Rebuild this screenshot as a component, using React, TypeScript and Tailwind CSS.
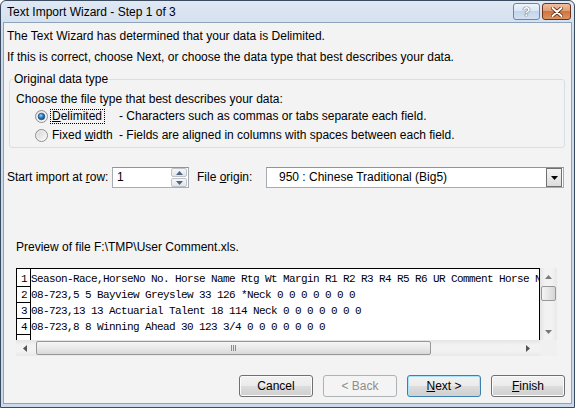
import React from 'react';

const previewRows = [
  'Season-Race,HorseNo No. Horse Name Rtg Wt Margin R1 R2 R3 R4 R5 R6 UR Comment Horse N',
  '08-723,5 5 Bayview Greyslew 33 126 *Neck 0 0 0 0 0 0 0',
  '08-723,13 13 Actuarial Talent 18 114 Neck 0 0 0 0 0 0 0',
  '08-723,8 8 Winning Ahead 30 123 3/4 0 0 0 0 0 0 0',
  '',
];

function Radio({ on, id }: { on?: boolean; id: string }) {
  return (
    <svg width="13" height="13" viewBox="0 0 13 13" className="shrink-0">
      <defs>
        <linearGradient id={`${id}-face`} x1="0" y1="0" x2="1" y2="1">
          <stop offset="0" stopColor="#d2d2d2" />
          <stop offset="1" stopColor="#fdfdfd" />
        </linearGradient>
        <radialGradient id={`${id}-dot`} cx="0.4" cy="0.35" r="0.75">
          <stop offset="0" stopColor="#9bd6fa" />
          <stop offset="0.45" stopColor="#2c7cc2" />
          <stop offset="1" stopColor="#0f3a6c" />
        </radialGradient>
      </defs>
      <circle cx="6.5" cy="6.5" r="6" fill={`url(#${id}-face)`} stroke="#8e8f8f" />
      <circle cx="6.5" cy="6.5" r="4.6" fill="none" stroke="#f4f4f4" strokeWidth="0.8" />
      {on && <circle cx="6.5" cy="6.5" r="3.3" fill={`url(#${id}-dot)`} stroke="#1b4a7a" strokeWidth="0.7" />}
    </svg>
  );
}

function Tri({ dir, color = '#5f5f5f' }: { dir: 'up' | 'down' | 'left' | 'right'; color?: string }) {
  const pts = {
    up: '0,4 3.5,0 7,4',
    down: '0,0 7,0 3.5,4',
    left: '4,0 4,7 0,3.5',
    right: '0,0 0,7 4,3.5',
  }[dir];
  const horiz = dir === 'left' || dir === 'right';
  return (
    <svg width={horiz ? 4 : 7} height={horiz ? 7 : 4} viewBox={horiz ? '0 0 4 7' : '0 0 7 4'}>
      <polygon points={pts} fill={color} />
    </svg>
  );
}

function Grip() {
  return (
    <div className="flex gap-[1px]">
      {[0, 1, 2].map(i => (
        <div key={i} className="h-[6px] w-[1px] bg-[#8c8c8c]" />
      ))}
    </div>
  );
}

function Btn({ children, kind }: { children: React.ReactNode; kind?: 'default' | 'disabled' }) {
  const base = 'flex h-[22px] w-[74px] items-center justify-center rounded-[3px] border text-[12px] leading-[15px]';
  if (kind === 'disabled') {
    return <button type="button" className={`${base} border-[#adb2b5] bg-[#f4f4f4] text-[#8d8d8d]`}>{children}</button>;
  }
  const face = 'bg-[linear-gradient(to_bottom,#f2f2f2_0%,#ebebeb_50%,#dddddd_50%,#cfcfcf_100%)]';
  if (kind === 'default') {
    return (
      <button type="button" className={`${base} ${face} border-[#3c7fb1] shadow-[inset_0_0_0_1px_#a9e2fb]`}>
        {children}
      </button>
    );
  }
  return (
    <button type="button" className={`${base} ${face} border-[#707070] shadow-[inset_0_0_0_1px_#fbfbfb]`}>
      {children}
    </button>
  );
}

export default function App() {
  return (
    <div className="h-[408px] w-[575px] bg-white font-['Liberation_Sans',Arial,sans-serif] text-black">
      {/* window frame */}
      <div className="flex h-full flex-col rounded-t-[6px] border border-[#3a4b60] bg-[linear-gradient(to_bottom,#dfe8f3,#cddbec_40px,#cbd9ea)]">
        {/* title bar */}
        <div className="flex h-[21px] shrink-0 items-start justify-between pl-[6px] pr-[3px]">
          <span className="mt-[4px] text-[12px] leading-[15px]">Text Import Wizard - Step 1 of 3</span>
          <div className="mt-[2px] flex gap-[2px]">
            <div className="flex h-[17px] w-[27px] items-center justify-center rounded-[3px] border border-[#6a86a8] bg-[linear-gradient(to_bottom,#eef4fb_0%,#dbe7f4_45%,#c2d5ea_50%,#d3e2f2_100%)]">
              <span className="text-[13px] font-bold leading-[13px] text-white [text-shadow:0_0_1px_#3a4a5e,0_0_1px_#3a4a5e]">?</span>
            </div>
            <div className="flex h-[17px] w-[29px] items-center justify-center rounded-[3px] border border-[#6e3219] bg-[linear-gradient(to_bottom,#efc0a4_0%,#e09e74_45%,#cf7440_50%,#dd9260_100%)]">
              <svg width="12" height="10" viewBox="0 0 12 10">
                <path d="M1.5 1 L10.5 9 M10.5 1 L1.5 9" stroke="#5a2410" strokeWidth="3.6" strokeLinecap="round" />
                <path d="M1.5 1 L10.5 9 M10.5 1 L1.5 9" stroke="#ffffff" strokeWidth="2" strokeLinecap="round" />
              </svg>
            </div>
          </div>
        </div>

        {/* client area */}
        <div className="mx-[2px] mb-[3px] flex flex-1 flex-col border border-[#8da2bb] bg-[#f3f3f3] text-[12px] leading-[15px]">
          <p className="ml-[3px] mt-[6px]">The Text Wizard has determined that your data is Delimited.</p>
          <p className="ml-[3px] mt-[6px]">If this is correct, choose Next, or choose the data type that best describes your data.</p>

          <fieldset className="ml-[5px] mt-[7px] w-[556px] rounded-[3px] border border-[#d5dfe5] px-[6px] pb-[3px]">
            <legend className="-ml-[3px] px-[1px]">Original data type</legend>
            <p className="mt-[5px]">Choose the file type that best describes your data:</p>
            <div className="ml-[19px] flex h-[18px] items-center">
              <Radio on id="rd-delim" />
              <div className="ml-[2px] w-[69px]">
                <span className="inline-block border border-dotted border-black pl-[1px] pr-[2px] leading-[13px]">
                  <span className="underline">D</span>elimited
                </span>
              </div>
              <span>- Characters such as commas or tabs separate each field.</span>
            </div>
            <div className="ml-[19px] mt-[1px] flex h-[18px] items-center">
              <Radio id="rd-fixed" />
              <div className="ml-[2px] w-[69px] pl-[2px]">
                Fixed <span className="underline">w</span>idth
              </div>
              <span>- Fields are aligned in columns with spaces between each field.</span>
            </div>
          </fieldset>

          {/* start row / file origin */}
          <div className="ml-[3px] mt-[19px] flex h-[21px] items-center">
            <span className="w-[105px]">
              Start import at <span className="underline">r</span>ow:
            </span>
            <div className="flex h-[21px] w-[77px] items-center border border-[#a5acb5] border-t-[#8e959e] bg-white pl-[4px]">
              <span className="flex-1">1</span>
              <div className="mr-[1px] flex h-[19px] w-[16px] flex-col gap-[1px]">
                <div className="flex flex-1 items-center justify-center rounded-[2px] border border-[#bcc3cb] bg-[linear-gradient(to_bottom,#f6f6f6,#e3e5e8)]">
                  <Tri dir="up" color="#4f6484" />
                </div>
                <div className="flex flex-1 items-center justify-center rounded-[2px] border border-[#bcc3cb] bg-[linear-gradient(to_bottom,#f6f6f6,#e3e5e8)]">
                  <Tri dir="down" color="#4f6484" />
                </div>
              </div>
            </div>
            <span className="ml-[8px] w-[69px]">
              File <span className="underline">o</span>rigin:
            </span>
            <div className="flex h-[21px] w-[298px] items-center border border-[#a5acb5] border-t-[#8e959e] bg-white pl-[12px]">
              <span className="flex-1">950 : Chinese Traditional (Big5)</span>
              <div className="mr-[1px] flex h-[19px] w-[16px] items-center justify-center border border-[#707070] bg-[linear-gradient(to_bottom,#f4f4f4,#dcdcdc)]">
                <Tri dir="down" color="#000000" />
              </div>
            </div>
          </div>

          <p className="ml-[12px] mt-[52px]">Preview of file F:\TMP\User Comment.xls.</p>

          {/* preview grid */}
          <div className="ml-[12px] mt-[13px] flex w-[541px] flex-col">
            <div className="flex h-[72px]">
              <div className="flex w-[524px] overflow-hidden border-x border-t border-black bg-white font-['Liberation_Mono',monospace] text-[11px] leading-[16px] tracking-[-0.6px]">
                <div className="flex w-[14px] shrink-0 flex-col border-r border-black">
                  {previewRows.map((_, i) => (
                    <div key={i} className="flex h-[16px] shrink-0 items-end justify-center border-b border-black pl-[1px] leading-[14px] first:h-[18px]">
                      {i < 4 ? i + 1 : ''}
                    </div>
                  ))}
                </div>
                <div className="flex-1 overflow-hidden pt-[2px]">
                  {previewRows.map((r, i) => (
                    <div key={i} className="h-[16px] whitespace-pre">
                      {r}
                    </div>
                  ))}
                </div>
              </div>
              {/* vertical scrollbar */}
              <div className="flex w-[17px] flex-col bg-[linear-gradient(to_right,#e4e4e4,#f2f2f2_30%,#f2f2f2_70%,#e8e8e8)]">
                <div className="flex h-[17px] items-center justify-center">
                  <Tri dir="up" color="#7a7a7a" />
                </div>
                <div className="mx-[1px] mt-[1px] h-[15px] rounded-[2px] border border-[#979797] bg-[linear-gradient(to_right,#f4f4f4,#e6e6e6_50%,#d6d6d6)]" />
                <div className="flex-1" />
                <div className="flex h-[17px] items-center justify-center">
                  <Tri dir="down" color="#7a7a7a" />
                </div>
              </div>
            </div>
            <div className="flex h-[16px]">
              {/* horizontal scrollbar */}
              <div className="flex w-[524px] items-center bg-[linear-gradient(to_bottom,#e4e4e4,#f2f2f2_30%,#f2f2f2_70%,#e8e8e8)]">
                <div className="flex h-full w-[17px] items-center justify-center">
                  <Tri dir="left" color="#555555" />
                </div>
                <div className="ml-[3px] flex h-[14px] w-[395px] items-center justify-center rounded-[2px] border border-[#979797] bg-[linear-gradient(to_bottom,#f5f5f5,#e9e9e9_50%,#d9d9d9)]">
                  <Grip />
                </div>
                <div className="flex-1" />
                <div className="mr-[4px] flex h-full w-[17px] items-center justify-center">
                  <Tri dir="right" color="#555555" />
                </div>
              </div>
              <div className="w-[17px] bg-[#f0f0f0]" />
            </div>
          </div>

          {/* wizard buttons */}
          <div className="mr-[6px] mt-[19px] flex justify-end gap-[10px]">
            <Btn>Cancel</Btn>
            <Btn kind="disabled">&lt; Back</Btn>
            <Btn kind="default">
              <span>
                <span className="underline">N</span>ext &gt;
              </span>
            </Btn>
            <Btn>
              <span>
                <span className="underline">F</span>inish
              </span>
            </Btn>
          </div>
        </div>
      </div>
    </div>
  );
}
